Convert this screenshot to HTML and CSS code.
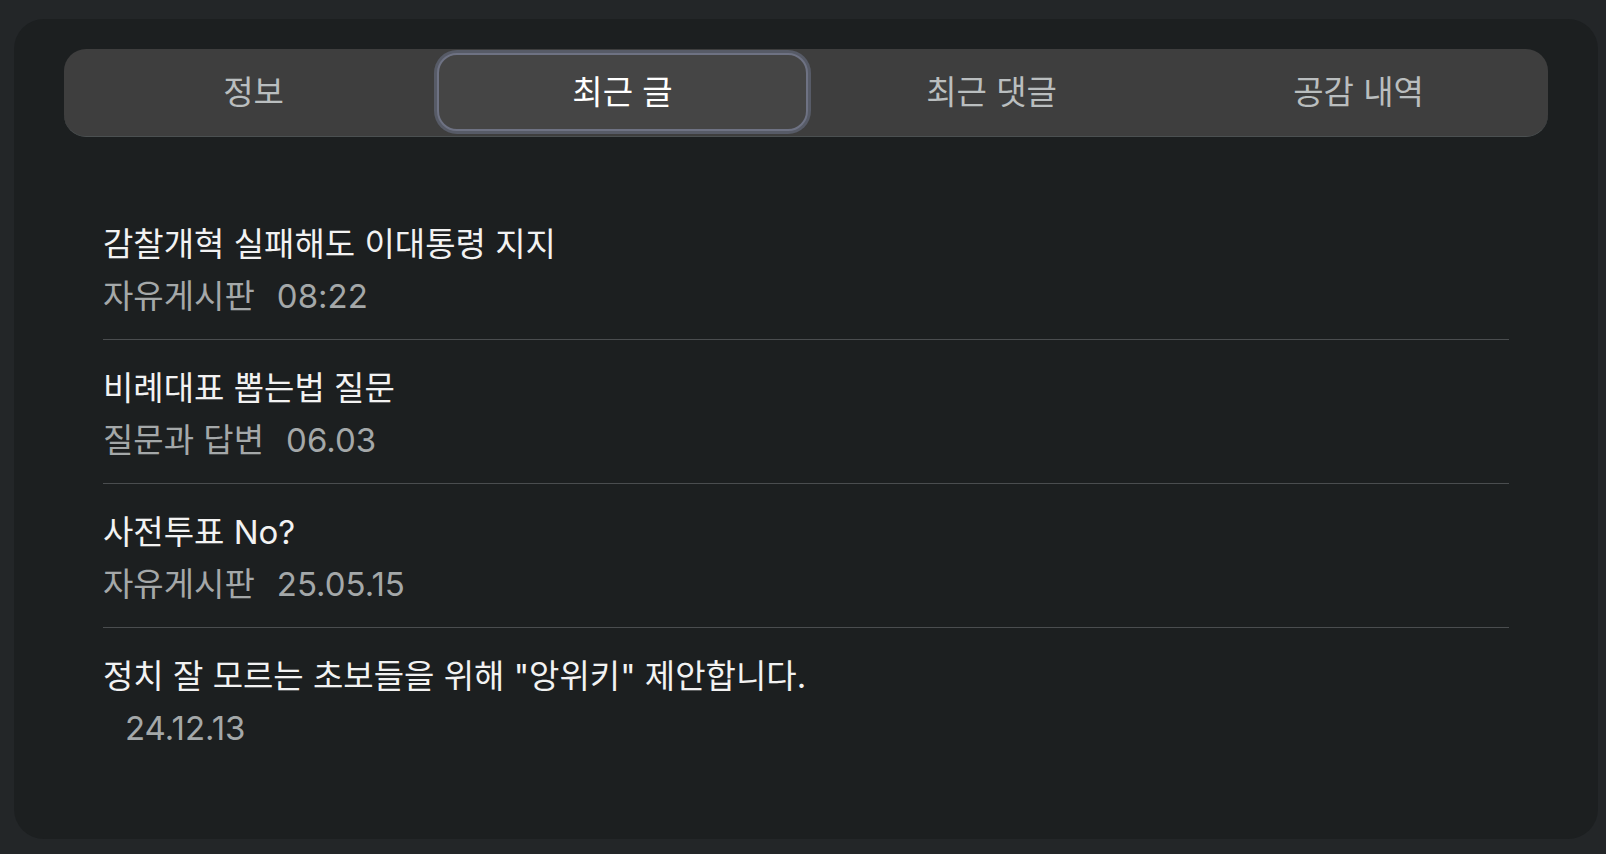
FILE: index.html
```html
<!DOCTYPE html>
<html lang="ko">
<head>
    <meta charset="UTF-8">
    <meta name="viewport" content="width=device-width, initial-scale=1.0">
    <title>최근 글</title>
    <link rel="stylesheet" href="styles.css">
</head>
<body>
    <div class="card">
        <nav class="tabs">
            <button class="tab">정보</button>
            <button class="tab active">최근 글</button>
            <button class="tab">최근 댓글</button>
            <button class="tab">공감 내역</button>
        </nav>
        <ul class="posts">
            <li class="post">
                <div class="post-title">감찰개혁 실패해도 이대통령 지지</div>
                <div class="post-meta"><span class="board">자유게시판</span><span class="date">08:22</span></div>
            </li>
            <li class="post">
                <div class="post-title">비례대표 뽑는법 질문</div>
                <div class="post-meta"><span class="board">질문과 답변</span><span class="date">06.03</span></div>
            </li>
            <li class="post">
                <div class="post-title">사전투표 No?</div>
                <div class="post-meta"><span class="board">자유게시판</span><span class="date">25.05.15</span></div>
            </li>
            <li class="post">
                <div class="post-title">정치 잘 모르는 초보들을 위해 "앙위키" 제안합니다.</div>
                <div class="post-meta"><span class="board"></span><span class="date">24.12.13</span></div>
            </li>
        </ul>
    </div>
</body>
</html>
```

FILE: styles.css
```css
body {
    margin: 0;
    padding: 19px 8px 15px 14px;
    background-color: #232628;
    font-family: Inter, "Noto Sans CJK KR", sans-serif;
    color: #f0f0f0;
}
.card {
    height: 820px;
    box-sizing: border-box;
    padding: 30px 50px 0;
    background-color: #1c1f20;
    border-radius: 30px;
}
.tabs {
    display: flex;
    height: 88px;
    box-sizing: border-box;
    padding: 4px 6px 5px;
    background-color: #3e3e3e;
    border-bottom: 1px solid #4b5051;
    border-radius: 22px;
}
.tab {
    flex: 1;
    margin: 0;
    padding: 0 0 4px;
    font-family: inherit;
    font-size: 33px;
    color: #babebf;
    background: none;
    border: none;
    border-radius: 20px;
    cursor: pointer;
}
.tab.active {
    color: #fff;
    background-color: #454545;
    border: 2px solid #6e7283;
    box-shadow: 0 0 0 3px #575b67;
}
.posts {
    list-style: none;
    margin: 59px 39px 0;
    padding: 0;
}
.post {
    padding: 24px 0 19px;
    border-bottom: 1px solid #4a4d4f;
}
.post:last-child {
    border-bottom: none;
}
.post-title {
    font-size: 33px;
    line-height: 48px;
    color: #f2f2f2;
}
.post-meta {
    margin-top: 4px;
    font-size: 33px;
    line-height: 48px;
    color: #a4a8a9;
}
.date {
    margin-left: 22px;
}
```
